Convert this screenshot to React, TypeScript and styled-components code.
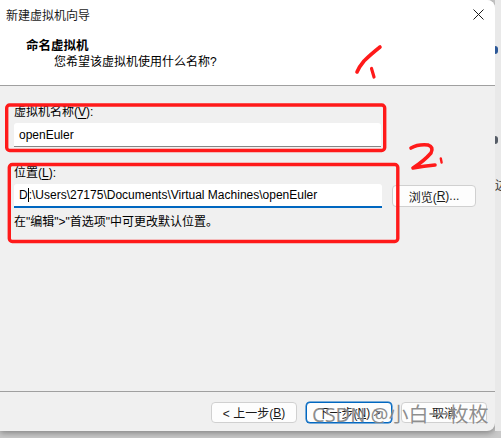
import { createGlobalStyle, styled } from "styled-components";

const GlobalStyle = createGlobalStyle`
  html, body {
    margin: 0;
    padding: 0;
    background: #dedede;
  }
  body {
    font-family: "Liberation Sans", "Noto Sans CJK SC", sans-serif;
    font-size: 12px;
    color: #000;
  }
`;

const App = () => {
  return (
    <>
      <GlobalStyle />
      <Page>
        <Window>
          <TitleBar>
            <TitleText>新建虚拟机向导</TitleText>
            <CloseButton aria-label="close">
              <svg width="11" height="11" viewBox="0 0 11 11">
                <path d="M0.5 0.5 L10.5 10.5 M10.5 0.5 L0.5 10.5" stroke="#1a1a1a" strokeWidth="1" />
              </svg>
            </CloseButton>
          </TitleBar>
          <Header>
            <HeaderTitle>命名虚拟机</HeaderTitle>
            <HeaderSub>您希望该虚拟机使用什么名称?</HeaderSub>
          </Header>
          <Body>
            <Field>
              <Label>
                虚拟机名称(<u>V</u>):
              </Label>
              <TextInput $width={367}>openEuler</TextInput>
            </Field>
            <Field>
              <Label>
                位置(<u>L</u>):
              </Label>
              <InputRow>
                <TextInput $width={368} $focused>
                  D<Caret />:\Users\27175\Documents\Virtual Machines\openEuler
                </TextInput>
                <Button $width={84} $height={22}>
                  浏览(<u>R</u>)...
                </Button>
              </InputRow>
              <Hint>在"编辑"&gt;"首选项"中可更改默认位置。</Hint>
            </Field>
          </Body>
          <Footer>
            <Button>
              &lt; 上一步(<u>B</u>)
            </Button>
            <Button $primary>
              下一步(<u>N</u>) &gt;
            </Button>
            <Button>取消</Button>
          </Footer>

          <Annotations width="495" height="431" viewBox="0 0 495 431">
            <g stroke="#ff1a1a" fill="none" strokeLinecap="round" strokeLinejoin="round">
              <rect x="6.7" y="105" width="378" height="45.5" rx="3" strokeWidth="3.4" />
              <rect x="9.3" y="164.5" width="388.5" height="77" rx="3" strokeWidth="3.4" />
              <path d="M380 47 Q370 55 364 61 Q359 67 357 72" strokeWidth="3.6" />
              <path d="M371.5 68.5 L374 77" strokeWidth="3.2" />
              <path d="M411 148 Q418 144 428 145 Q434 147 431 153 Q424 161 413 168 Q424 166 435 165" strokeWidth="3.6" />
              <path d="M440.8 158.5 L441.6 162.5" strokeWidth="2.4" />
            </g>
          </Annotations>
          <Watermark>CSDN @小白一枚枚</Watermark>
        </Window>
        <SideStrip>
          <SideDot $top={46} $color="#2b5797" />
          <SideDot $top={136} $color="#555c66" />
          <SideGlyph>边</SideGlyph>
        </SideStrip>
      </Page>
    </>
  );
};

export default App;

const Page = styled.div`
  display: flex;
  width: 501px;
  height: 438px;
  overflow: hidden;
  background: #c9c9c9;
`;

const Window = styled.div`
  position: relative;
  display: flex;
  flex-direction: column;
  width: 495px;
  height: 431px;
  flex-shrink: 0;
  background: #f0f0f0;
  border-radius: 0 8px 8px 0;
  overflow: hidden;
  box-shadow: 0 2px 6px rgba(0, 0, 0, 0.35);
`;

const TitleBar = styled.div`
  display: flex;
  align-items: center;
  justify-content: space-between;
  height: 28px;
  padding: 0 11px 0 6px;
  background: #fff;
`;

const TitleText = styled.span`
  font-size: 12px;
  color: #1a1a1a;
`;

const CloseButton = styled.div`
  display: flex;
  align-items: center;
  justify-content: center;
  width: 12px;
  height: 12px;
`;

const Header = styled.div`
  display: flex;
  flex-direction: column;
  height: 58px;
  padding-top: 10px;
  box-sizing: border-box;
  background: #fff;
  border-bottom: 1px solid #a0a0a0;
`;

const HeaderTitle = styled.div`
  padding-left: 26px;
  font-weight: 700;
  font-size: 12.5px;
  line-height: 16px;
`;

const HeaderSub = styled.div`
  padding-left: 54px;
  line-height: 16px;
`;

const Body = styled.div`
  flex: 1;
  display: flex;
  flex-direction: column;
  gap: 18px;
  padding: 18px 0 0 14px;
`;

const Field = styled.div`
  display: flex;
  flex-direction: column;
  gap: 3px;
`;

const Label = styled.div`
  line-height: 16px;

  u {
    text-underline-offset: 2px;
  }
`;

const InputRow = styled.div`
  display: flex;
  align-items: center;
  gap: 10px;
`;

const TextInput = styled.div<{ $width: number; $focused?: boolean }>`
  display: flex;
  align-items: center;
  width: ${p => p.$width}px;
  height: 24px;
  box-sizing: border-box;
  padding: 0 5px;
  background: #fff;
  border-bottom: ${p => (p.$focused ? "2px solid #0067c0" : "1px solid #868686")};
  border-radius: 3px 3px 0 0;
  white-space: nowrap;
  font-size: 12px;
`;

const Caret = styled.span`
  display: inline-block;
  width: 1px;
  height: 14px;
  background: #000;
`;

const Hint = styled.div`
  margin-top: 2px;
  line-height: 18px;
`;

const Footer = styled.div`
  display: flex;
  justify-content: flex-end;
  align-items: flex-start;
  gap: 9px;
  height: 40px;
  padding: 10px 8px 0 0;
  box-sizing: border-box;
  border-top: 1px solid #a0a0a0;
`;

const Button = styled.div<{ $width?: number; $height?: number; $primary?: boolean }>`
  display: flex;
  align-items: center;
  justify-content: center;
  width: ${p => p.$width ?? 86}px;
  height: ${p => p.$height ?? 21}px;
  box-sizing: border-box;
  background: #fdfdfd;
  border: 1px solid ${p => (p.$primary ? "#0067c0" : "#d0d0d0")};
  box-shadow: ${p => (p.$primary ? "0 0 0 0.5px #0067c0" : "none")};
  border-radius: 4px;
  font-size: 12px;
  color: #1a1a1a;
  flex-shrink: 0;
`;

const Annotations = styled.svg`
  position: absolute;
  left: 0;
  top: 0;
  pointer-events: none;
`;

const Watermark = styled.div`
  position: absolute;
  left: 312px;
  top: 402px;
  font-family: "Noto Sans", "Noto Sans CJK SC", sans-serif;
  font-size: 20px;
  line-height: 26px;
  color: rgba(105, 105, 105, 0.75);
  text-shadow: 0 0 1px rgba(255, 255, 255, 0.8);
  white-space: nowrap;
  pointer-events: none;
`;

const SideStrip = styled.div`
  position: relative;
  flex: 1;
  height: 431px;
  background: #e9e9e9;
  overflow: hidden;
`;

const SideDot = styled.div<{ $top: number; $color: string }>`
  position: absolute;
  left: 0;
  top: ${p => p.$top}px;
  width: 3px;
  height: 8px;
  border-radius: 0 3px 3px 0;
  background: ${p => p.$color};
`;

const SideGlyph = styled.div`
  position: absolute;
  left: 0;
  top: 176px;
  width: 6px;
  overflow: hidden;
  font-family: "Noto Sans CJK SC", sans-serif;
  font-size: 12px;
  color: #333;
`;
